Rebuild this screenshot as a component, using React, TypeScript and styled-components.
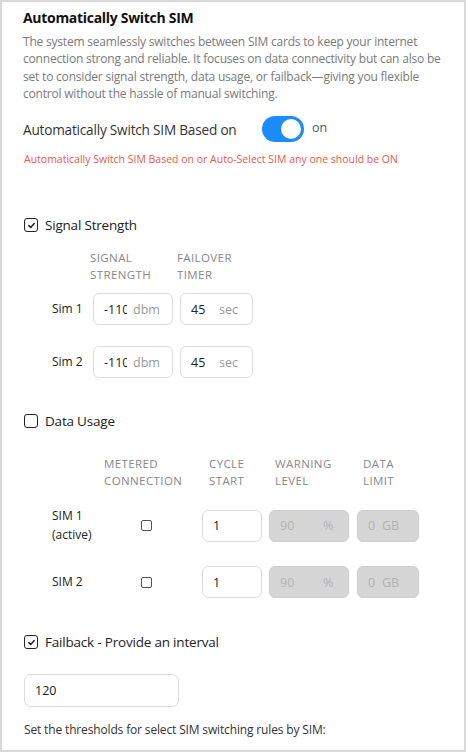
import React from "react";
import styled, { createGlobalStyle } from "styled-components";

const Global = createGlobalStyle`
  html, body { margin: 0; padding: 0; background: #fff; }
  body { font-family: "Open Sans", "Noto Sans", Arial, sans-serif; }
  * { box-sizing: border-box; }
`;

const Frame = styled.div`
  width: 466px;
  height: 752px;
  border: 2px solid #d9d9d9;
  padding: 6px 21px 0 21px;
  overflow: hidden;
  color: #222;
`;

const Title = styled.h1`
  margin: 0;
  font-size: 14px;
  line-height: 20px;
  font-weight: 700;
  letter-spacing: -0.3px;
  color: #111;
`;

const Desc = styled.p`
  margin: 5px 0 0;
  font-size: 12px;
  letter-spacing: -0.2px;
  line-height: 17.3px;
  color: #7a7a7a;
`;

const ToggleRow = styled.div`
  display: flex;
  align-items: center;
  margin-top: 14px;
  height: 26px;
`;

const ToggleLabel = styled.span`
  font-size: 13.6px;
  letter-spacing: -0.2px;
  color: #333;
  width: 239px;
`;

const Switch = styled.div<{ $on: boolean }>`
  width: 42px;
  height: 26px;
  border-radius: 13px;
  background: ${(p) => (p.$on ? "#1a8cff" : "#ccc")};
  position: relative;
  &::after {
    content: "";
    position: absolute;
    top: 3px;
    left: ${(p) => (p.$on ? "19px" : "3px")};
    width: 20px;
    height: 20px;
    border-radius: 50%;
    background: #fff;
  }
`;

const SwitchText = styled.span`
  margin-left: 8px;
  font-size: 12.5px;
  color: #555;
  align-self: flex-start;
  margin-top: 3px;
`;

const ErrorText = styled.p`
  margin: 10px 0 0 1px;
  font-size: 10.5px;
  line-height: 14px;
  color: #f0574a;
`;

const CheckRow = styled.label<{ $mt: number }>`
  display: flex;
  align-items: center;
  gap: 7px;
  margin-top: ${(p) => p.$mt}px;
  margin-left: 1px;
  height: 18px;
  font-size: 13.5px;
  letter-spacing: -0.2px;
  color: #222;
`;

const Box = styled.span`
  display: inline-flex;
  width: 14px;
  height: 14px;
  border: 1.6px solid #222;
  border-radius: 3px;
  align-items: center;
  justify-content: center;
`;

const SmallBox = styled.span`
  display: inline-block;
  width: 11px;
  height: 11px;
  border: 1.2px solid #555;
  border-radius: 2px;
`;

const Check = ({ checked }: { checked: boolean }) => (
  <Box>
    {checked && (
      <svg width="9" height="9" viewBox="0 0 9 9">
        <path d="M1.8 4.6 L3.7 6.4 L7.2 2.6" fill="none" stroke="#222" strokeWidth="1.5" strokeLinecap="round" strokeLinejoin="round" />
      </svg>
    )}
  </Box>
);

const Grid = styled.div<{ $cols: string; $mt: number }>`
  display: grid;
  grid-template-columns: ${(p) => p.$cols};
  margin-top: ${(p) => p.$mt}px;
  margin-left: 29px;
  align-items: center;
`;

const Head = styled.div<{ $pl: number; $mb: number }>`
  font-size: 11.5px;
  line-height: 17px;
  color: #888;
  letter-spacing: 0.4px;
  text-transform: uppercase;
  padding-left: ${(p) => p.$pl}px;
  margin-bottom: ${(p) => p.$mb}px;
`;

const RowLabel = styled.div`
  font-size: 12px;
  line-height: 18.4px;
  color: #222;
`;

const Field = styled.div<{ $w: number; $ml?: number; $disabled?: boolean; $h?: number }>`
  display: flex;
  align-items: center;
  width: ${(p) => p.$w}px;
  height: ${(p) => p.$h ?? 32}px;
  margin-left: ${(p) => p.$ml ?? 0}px;
  border: 1px solid ${(p) => (p.$disabled ? "#cfcfcf" : "#dcdcdc")};
  border-radius: 6px;
  background: ${(p) => (p.$disabled ? "#d6d6d6" : "#fff")};
  padding-left: 10px;
  font-size: 12.5px;
`;

const Value = styled.input<{ $w: number; $disabled?: boolean }>`
  width: ${(p) => p.$w}px;
  border: none;
  outline: none;
  padding: 0;
  background: transparent;
  font: inherit;
  color: ${(p) => (p.$disabled ? "#b2b2b2" : "#222")};
`;

const Suffix = styled.span<{ $disabled?: boolean; $ml?: number }>`
  margin-left: ${(p) => p.$ml ?? 0}px;
  color: ${(p) => (p.$disabled ? "#b2b2b2" : "#999")};
`;

const RowGap = styled.div<{ $h: number }>`
  grid-column: 1 / -1;
  height: ${(p) => p.$h}px;
`;

const BoxCell = styled.div`
  padding-left: 43px;
  display: flex;
  align-items: center;
`;

const Footer = styled.p`
  margin: 13.5px 0 0 1px;
  font-size: 12px;
  letter-spacing: -0.15px;
  line-height: 17px;
  color: #333;
`;

const FailField = styled(Field)`
  margin-top: 23px;
  margin-left: 1px;
  border-radius: 7px;
`;

export default function App() {
  return (
    <>
      <Global />
      <Frame>
        <Title>Automatically Switch SIM</Title>
        <Desc>
          The system seamlessly switches between SIM cards to keep your internet connection strong and reliable. It
          focuses on data connectivity but can also be set to consider signal strength, data usage, or failback—giving
          you flexible control without the hassle of manual switching.
        </Desc>
        <ToggleRow>
          <ToggleLabel>Automatically Switch SIM Based on</ToggleLabel>
          <Switch $on />
          <SwitchText>on</SwitchText>
        </ToggleRow>
        <ErrorText>Automatically Switch SIM Based on or Auto-Select SIM any one should be ON</ErrorText>

        <CheckRow $mt={50}>
          <Check checked />
          Signal Strength
        </CheckRow>
        <Grid $cols="38px 87px 80px" $mt={14.5}>
          <div />
          <Head $pl={0} $mb={10.5}>Signal<br />Strength</Head>
          <Head $pl={0} $mb={10.5}>Failover<br />Timer</Head>
          {["Sim 1", "Sim 2"].map((s, i) => (
            <React.Fragment key={s}>
              {i > 0 && <RowGap $h={21} />}
              <RowLabel>{s}</RowLabel>
              <Field $w={80} $ml={3}>
                <Value $w={23} readOnly value="-110" />
                <Suffix $ml={6}>dbm</Suffix>
              </Field>
              <Field $w={73} $ml={3}>
                <Value $w={28} readOnly value="45" />
                <Suffix>sec</Suffix>
              </Field>
            </React.Fragment>
          ))}
        </Grid>

        <CheckRow $mt={34}>
          <Check checked={false} />
          Data Usage
        </CheckRow>
        <Grid $cols="46px 104px 67px 88px 62px" $mt={24.5}>
          <div />
          <Head $pl={6} $mb={18.5}>Metered<br />Connection</Head>
          <Head $pl={7} $mb={18.5}>Cycle<br />Start</Head>
          <Head $pl={6} $mb={18.5}>Warning<br />Level</Head>
          <Head $pl={6} $mb={18.5}>Data<br />Limit</Head>
          {[["SIM 1", "(active)"], ["SIM 2"]].map((s, i) => (
            <React.Fragment key={i}>
              {i > 0 && <RowGap $h={22} />}
              <RowLabel>
                {s[0]}
                {s[1] && (
                  <>
                    <br />
                    {s[1]}
                  </>
                )}
              </RowLabel>
              <BoxCell>
                <SmallBox />
              </BoxCell>
              <Field $w={60}>
                <Value $w={30} readOnly value="1" />
              </Field>
              <Field $w={80} $disabled>
                <Value $w={43} $disabled readOnly value="90" />
                <Suffix $disabled>%</Suffix>
              </Field>
              <Field $w={62} $disabled>
                <Value $w={14} $disabled readOnly value="0" />
                <Suffix $disabled>GB</Suffix>
              </Field>
            </React.Fragment>
          ))}
        </Grid>

        <CheckRow $mt={35}>
          <Check checked />
          Failback - Provide an interval
        </CheckRow>
        <FailField $w={155} $h={33}>
          <Value $w={100} readOnly value="120" />
        </FailField>
        <Footer>Set the thresholds for select SIM switching rules by SIM:</Footer>
      </Frame>
    </>
  );
}
